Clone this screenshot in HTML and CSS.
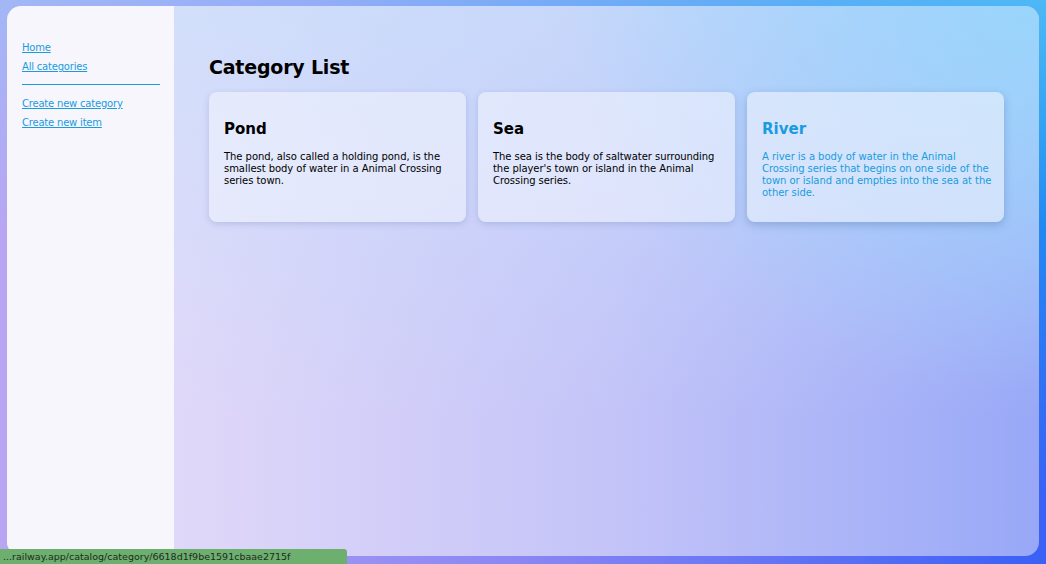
FILE: index.html
```html
<!DOCTYPE html>
<html>
<head>
<meta charset="utf-8">
<link rel="stylesheet" href="styles.css">
</head>
<body>
<div class="window">
  <nav class="sidebar">
    <a href="#">Home</a>
    <a href="#">All categories</a>
    <hr class="divider">
    <a href="#">Create new category</a>
    <a href="#">Create new item</a>
  </nav>
  <main class="main">
    <h1 class="title">Category List</h1>
    <div class="cards">
      <div class="card">
        <h2 class="card-title">Pond</h2>
        <p class="card-text">The pond, also called a holding pond, is the smallest body of water in a Animal Crossing series town.</p>
      </div>
      <div class="card">
        <h2 class="card-title">Sea</h2>
        <p class="card-text">The sea is the body of saltwater surrounding the player's town or island in the Animal Crossing series.</p>
      </div>
      <div class="card card-hover">
        <h2 class="card-title">River</h2>
        <p class="card-text">A river is a body of water in the Animal Crossing series that begins on one side of the town or island and empties into the sea at the other side.</p>
      </div>
    </div>
  </main>
</div>
<div class="status">...railway.app/catalog/category/6618d1f9be1591cbaae2715f</div>
</body>
</html>
```
FILE: styles.css
```css
html, body {
  margin: 0;
  height: 100%;
}
body {
  font-family: "DejaVu Sans", Verdana, sans-serif;
  background:
    linear-gradient(180deg, rgba(140,200,250,0.5), rgba(140,200,250,0) 40%),
    radial-gradient(ellipse 70% 90% at 100% 0%, rgba(16,168,240,1), rgba(16,168,240,0)),
    linear-gradient(90deg, #b8a6f2 0%, #8a86f4 50%, #3a60f6 100%);
  padding: 6px 7px 8px 7px;
  box-sizing: border-box;
  position: relative;
  overflow: hidden;
}
.window {
  display: flex;
  height: 550px;
  border-radius: 14px;
  overflow: hidden;
}
.sidebar {
  width: 167px;
  flex: none;
  background: #f7f6fd;
  padding: 32px 14px 0 15px;
  box-sizing: border-box;
  display: flex;
  flex-direction: column;
}
.sidebar a {
  color: #1a9be0;
  font-size: 10px;
  line-height: 19px;
  letter-spacing: -0.2px;
  text-decoration: underline;
}
.divider {
  border: none;
  border-top: 1px solid #1a9be0;
  margin: 8px 0 9px 0;
  width: 138px;
}
.main {
  flex: 1;
  background:
    radial-gradient(ellipse 55% 70% at 100% 0%, rgba(150,214,252,0.9), rgba(150,214,252,0)),
    linear-gradient(180deg, rgba(200,228,252,0.6) 0%, rgba(200,228,252,0) 75%),
    linear-gradient(90deg, #e0d8f9 0%, #c4c4f8 50%, #98a8f7 100%);
  padding: 48px 35px 0 35px;
}
.title {
  margin: 0 0 12px 0;
  font-size: 19px;
  line-height: 26px;
  letter-spacing: -0.2px;
  font-weight: bold;
  color: #000;
}
.cards {
  display: grid;
  grid-template-columns: repeat(3, 1fr);
  gap: 12px;
}
.card {
  height: 130px;
  box-sizing: border-box;
  border-radius: 8px;
  background: rgba(240, 244, 253, 0.6);
  box-shadow: 0 2px 6px rgba(90, 110, 170, 0.25);
  padding: 27px 8px 0 15px;
}
.card-hover {
  box-shadow: 0 3px 8px rgba(70, 100, 160, 0.35);
}
.card-title {
  margin: 0 0 12px 0;
  font-size: 15px;
  line-height: 20px;
  font-weight: bold;
  color: #000;
}
.card-text {
  margin: 0;
  font-size: 10px;
  line-height: 12px;
  letter-spacing: -0.05px;
  color: #000;
}
.card-hover .card-title,
.card-hover .card-text {
  color: #1a9be0;
}
.status {
  position: absolute;
  left: 0;
  bottom: 0;
  width: 347px;
  height: 15px;
  background: #6caf6e;
  color: #1f2a1f;
  font-size: 9.5px;
  line-height: 15px;
  padding-left: 3px;
  box-sizing: border-box;
  border-radius: 0 3px 0 0;
  white-space: nowrap;
  overflow: hidden;
}
```
